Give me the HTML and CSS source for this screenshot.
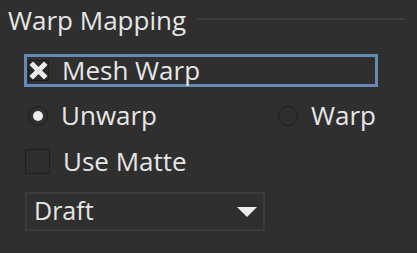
FILE: index.html
```html
<!DOCTYPE html>
<html lang="en">

<head>
    <meta charset="UTF-8">
    <meta name="viewport" content="width=device-width, initial-scale=1.0">
    <title>Warp Mapping</title>
    <link rel="stylesheet" href="styles.css">
</head>

<body>

    <div class="panel">

        <div class="header">
            <span class="title">Warp Mapping</span>
            <span class="rule"></span>
        </div>

        <div class="options">

            <label class="mesh">
                <span class="check checked">
                    <svg width="19" height="19" viewBox="0 0 19 19">
                        <path d="M4 4 L15 15 M15 4 L4 15" stroke="#ececec" stroke-width="5" stroke-linecap="square" />
                    </svg>
                </span>
                <span class="label">Mesh Warp</span>
            </label>

            <div class="radios">
                <label class="radio-item">
                    <span class="radio on"></span>
                    <span class="label">Unwarp</span>
                </label>
                <label class="radio-item">
                    <span class="radio"></span>
                    <span class="label">Warp</span>
                </label>
            </div>

            <label class="matte">
                <span class="check"></span>
                <span class="label">Use Matte</span>
            </label>

            <div class="select">
                <span class="label">Draft</span>
                <span class="arrow"></span>
            </div>

        </div>

    </div>

</body>

</html>
```

FILE: styles.css
```css
body {
    margin: 0;
    background: #2f2f2f;
    color: #e6e6e6;
    font-family: "Open Sans", "Noto Sans", sans-serif;
}

.panel {
    padding: 4px 12px 0 8px;
}

.header {
    display: flex;
    align-items: center;
    gap: 11px;
}

.title {
    font-size: 26px;
    font-weight: 500;
    line-height: 32px;
}

.rule {
    flex: 1;
    height: 2px;
    margin-top: -2px;
    background: #3d3d3d;
}

.options {
    padding-left: 16px;
    display: flex;
    flex-direction: column;
}

.label {
    font-size: 26px;
    font-weight: 500;
    line-height: 27px;
}

.mesh {
    margin-top: 18px;
    width: 348px;
    height: 27px;
    border: 3px solid #6389b4;
    display: flex;
    align-items: center;
    gap: 13px;
}

.check {
    box-sizing: border-box;
    border: 1px solid #1d1d1d;
    display: flex;
    align-items: center;
    justify-content: center;
}

.mesh .check {
    width: 21px;
    height: 21px;
    margin-left: 1px;
    background: #2a2a2a;
}

.radios {
    margin-top: 15px;
    padding-left: 4px;
    display: grid;
    grid-template-columns: 250px auto;
}

.radio-item {
    display: flex;
    align-items: center;
    gap: 13px;
}

.radio {
    width: 20px;
    height: 20px;
    box-sizing: border-box;
    border-radius: 50%;
    border: 1px solid #1b1b1b;
    display: flex;
    align-items: center;
    justify-content: center;
}

.radio.on::after {
    content: "";
    width: 10px;
    height: 10px;
    border-radius: 50%;
    background: #ececec;
}

.matte {
    margin-top: 19px;
    padding-left: 1px;
    display: flex;
    align-items: center;
    gap: 13px;
}

.matte .check {
    width: 25px;
    height: 25px;
}

.select {
    margin-top: 17px;
    margin-left: 1px;
    width: 240px;
    height: 39px;
    box-sizing: border-box;
    border: 2px solid #3b3b3b;
    display: flex;
    align-items: center;
    justify-content: space-between;
    padding: 0 6px 3px 7px;
}

.select .label {
    font-size: 25px;
}

.arrow {
    width: 0;
    height: 0;
    margin-top: 3px;
    border-left: 10px solid transparent;
    border-right: 10px solid transparent;
    border-top: 10px solid #ececec;
}
```
